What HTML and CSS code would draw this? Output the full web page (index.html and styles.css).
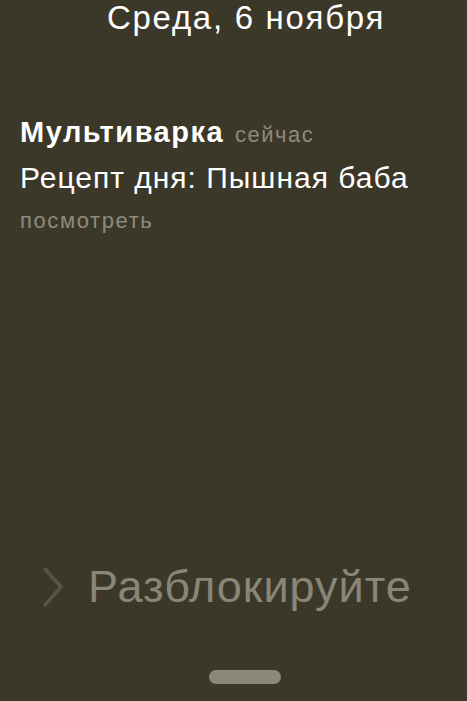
FILE: index.html
```html
<!DOCTYPE html>
<html lang="ru">
<head>
<meta charset="utf-8">
<link rel="stylesheet" href="styles.css">
</head>
<body>
<div class="screen">
  <div class="date">Среда, 6 ноября</div>
  <div class="notif">
    <div class="head"><span class="app">Мультиварка</span><span class="time">сейчас</span></div>
    <div class="msg">Рецепт дня: Пышная баба</div>
    <div class="action">посмотреть</div>
  </div>
  <div class="spacer"></div>
  <div class="unlock">
    <svg class="chev" width="22" height="42" viewBox="0 0 22 42"><path d="M3 3 L19 21 L3 39" fill="none" stroke="#58543f" stroke-width="3.5" stroke-linecap="round" stroke-linejoin="round"/></svg>
    <span class="unlock-text">Разблокируйте</span>
  </div>
  <div class="handle-row"><div class="handle"></div></div>
</div>
</body>
</html>
```
FILE: styles.css
```css
html, body { margin: 0; padding: 0; }
body { background: #3c3829; font-family: "Liberation Sans", Arial, sans-serif; }
.screen { width: 467px; height: 701px; display: flex; flex-direction: column; overflow: hidden; }
.date { color: #fff; font-size: 33px; line-height: 36px; letter-spacing: 1.7px; text-align: center; padding-left: 25px; }
.notif { padding: 79px 20px 0 20px; }
.head { display: flex; align-items: baseline; gap: 11px; line-height: 34px; }
.app { color: #fff; font-weight: bold; font-size: 29px; letter-spacing: 1.5px; }
.time { color: #8e8a7d; font-size: 22px; letter-spacing: 1.5px; }
.msg { color: #fff; font-size: 30px; line-height: 40px; letter-spacing: 1px; margin-top: 6px; }
.action { color: #8e8a7d; font-size: 22px; line-height: 30px; letter-spacing: 1.6px; margin-top: 8px; }
.spacer { flex: 1; }
.unlock { display: flex; align-items: center; padding-left: 42px; gap: 24px; height: 50px; }
.chev { display: block; }
.unlock-text { color: #8a8677; font-size: 45px; line-height: 50px; letter-spacing: 1px; }
.handle-row { display: flex; justify-content: center; padding: 58px 0 17px 23px; }
.handle { width: 72px; height: 14px; border-radius: 7px; background: #8b887a; }
```
